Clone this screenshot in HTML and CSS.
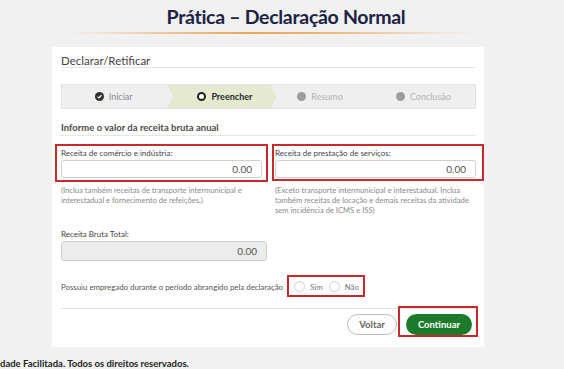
FILE: index.html
```html
<!DOCTYPE html>
<html lang="pt-BR">
<head>
    <meta charset="UTF-8">
    <meta name="viewport" content="width=device-width, initial-scale=1.0">
    <title>Prática – Declaração Normal</title>
    <link rel="stylesheet" href="styles.css">
</head>
<body>
    <header class="slide-head">
        <h1>Prática – Declaração Normal</h1>
        <div class="head-rule"></div>
    </header>

    <main class="card">
        <h2 class="card-title">Declarar/Retificar</h2>

        <ol class="steps">
            <li class="step done">
                <span class="step-icon">
                    <svg viewBox="0 0 10 10" width="9" height="9"><circle cx="5" cy="5" r="5" fill="#2f2f2f"/><path d="M2.8 5.1 L4.4 6.6 L7.2 3.6" fill="none" stroke="#fff" stroke-width="1.4"/></svg>
                </span>
                Iniciar
            </li>
            <li class="step active">
                <span class="step-icon ring"></span>
                Preencher
            </li>
            <li class="step">
                <span class="step-icon dot"></span>
                Resumo
            </li>
            <li class="step">
                <span class="step-icon dot"></span>
                Conclusão
            </li>
        </ol>

        <h3 class="section-title">Informe o valor da receita bruta anual</h3>

        <div class="fields">
            <div class="col">
                <div class="field">
                    <label class="field-label">Receita de comércio e indústria:</label>
                    <div class="money">0.00</div>
                    <span class="mark mark-1"></span>
                </div>
                <p class="help">(Inclua também receitas de transporte intermunicipal e interestadual e fornecimento de refeições.)</p>
            </div>
            <div class="col">
                <div class="field">
                    <label class="field-label">Receita de prestação de serviços:</label>
                    <div class="money">0.00</div>
                    <span class="mark mark-2"></span>
                </div>
                <p class="help">(Exceto transporte intermunicipal e interestadual. Inclua também receitas de locação e demais receitas da atividade sem incidência de ICMS e ISS)</p>
            </div>
        </div>

        <div class="total">
            <label class="field-label">Receita Bruta Total:</label>
            <div class="money readonly">0.00</div>
        </div>

        <div class="question">
            <span>Possuiu empregado durante o período abrangido pela declaração</span>
            <span class="radios">
                <span class="radio"><span class="radio-dot"></span>Sim</span>
                <span class="radio"><span class="radio-dot"></span>Não</span>
                <span class="mark mark-3"></span>
            </span>
        </div>

        <div class="actions">
            <button class="btn btn-back">Voltar</button>
            <span class="btn-wrap">
                <button class="btn btn-next">Continuar</button>
                <span class="mark mark-4"></span>
            </span>
        </div>
    </main>

    <footer class="foot">dade Facilitada. Todos os direitos reservados.</footer>
</body>
</html>
```

FILE: styles.css
```css
body {
    margin: 0;
    background-color: #f1f1f1;
    font-family: Lato, 'Open Sans', sans-serif;
    overflow: hidden;
    height: 369px;
}

.slide-head {
    padding-top: 5px;
    height: 42px;
    box-sizing: border-box;
}

.slide-head h1 {
    margin: 0 0 0 8px;
    text-align: center;
    font-size: 19.5px;
    line-height: 24px;
    font-weight: 700;
    color: #1c2244;
    letter-spacing: -0.3px;
}

.head-rule {
    height: 2px;
    margin: 3px 89px 0 66px;
    background: linear-gradient(90deg, rgba(233, 164, 82, 0), #e9a452 45%, #eeb36c 60%, rgba(233, 164, 82, 0));
}

.card {
    display: block;
    margin: 5px 0 0 52px;
    width: 432px;
    height: 300px;
    box-sizing: border-box;
    padding: 0 8px 0 9px;
    background-color: #fff;
}

.card-title {
    margin: 0;
    padding-top: 7px;
    height: 13px;
    font-size: 11.5px;
    line-height: 14px;
    font-weight: 400;
    color: #444;
    border-bottom: 1px solid #e4e4e4;
}

.steps {
    list-style: none;
    margin: 16px 0 0;
    padding: 0;
    height: 25px;
    display: flex;
    background-color: #efefef;
    border: 1px solid #e2e2e2;
    box-sizing: border-box;
}

.step {
    flex: 1;
    display: flex;
    align-items: center;
    justify-content: center;
    gap: 5px;
    font-size: 9px;
    color: #b4b4b4;
}

.step.done {
    color: #8a8a8a;
}

.step.active {
    background-color: #e4e9d0;
    color: #2a2a2a;
    font-weight: 700;
    margin: 0 -8px 0 2px;
    padding-left: 6px;
    clip-path: polygon(0 0, calc(100% - 6px) 0, 100% 50%, calc(100% - 6px) 100%, 0 100%, 6px 50%);
}

.step-icon {
    width: 9px;
    height: 9px;
    display: inline-flex;
}

.step-icon.ring {
    box-sizing: border-box;
    border-radius: 50%;
    border: 2.5px solid #232323;
    background-color: #fff;
}

.step-icon.dot {
    border-radius: 50%;
    background-color: #9d9d9d;
}

.section-title {
    margin: 13px 0 0;
    height: 13px;
    font-size: 9.5px;
    line-height: 12px;
    font-weight: 700;
    color: #4a4a4a;
    border-bottom: 1px solid #e6e6e6;
}

.fields {
    display: grid;
    grid-template-columns: 201px 201px;
    column-gap: 13px;
    margin-top: 12px;
}

.field {
    position: relative;
}

.field-label {
    display: block;
    font-size: 8px;
    line-height: 11px;
    color: #444;
    margin-bottom: 1px;
}

.money {
    height: 18px;
    box-sizing: border-box;
    border: 1px solid #d0d0d0;
    border-radius: 3px;
    text-align: right;
    padding-right: 9px;
    font-size: 10px;
    line-height: 16px;
    color: #555;
}

.money.readonly {
    height: 20px;
    line-height: 18px;
    background-color: #ececec;
    border-color: #cfcfcf;
}

.mark {
    position: absolute;
    border: 2px solid #c62a2a;
}

.mark-1 {
    top: -4px;
    left: -6px;
    right: -6px;
    bottom: -4px;
}

.mark-2 {
    top: -4px;
    left: -3px;
    right: -8px;
    bottom: -3px;
}

.help {
    margin: 7px 0 0;
    font-size: 7.6px;
    line-height: 10px;
    color: #8a8a8a;
}

.total {
    width: 206px;
    margin-top: 14px;
}

.question {
    display: flex;
    align-items: center;
    margin-top: 15px;
    height: 21px;
    font-size: 7.85px;
    color: #555;
    border-bottom: 1px solid #e4e4e4;
    padding-bottom: 11px;
}

.radios {
    position: relative;
    display: inline-flex;
    align-items: center;
    gap: 6px;
    margin-left: 11px;
    color: #777;
}

.radio {
    display: inline-flex;
    align-items: center;
    gap: 5px;
}

.radio-dot {
    width: 11px;
    height: 11px;
    box-sizing: border-box;
    border: 1px solid #d2d2d2;
    border-radius: 50%;
}

.mark-3 {
    top: -6px;
    bottom: -5px;
    left: -7px;
    right: -6px;
}

.actions {
    display: flex;
    justify-content: flex-end;
    align-items: center;
    gap: 9px;
    margin-top: 5px;
    padding-right: 4px;
}

.btn {
    font-family: Lato, 'Open Sans', sans-serif;
    height: 21px;
    border-radius: 11px;
    font-size: 9.5px;
    font-weight: 700;
    cursor: pointer;
    padding: 0;
}

.btn-back {
    width: 50px;
    background-color: #fff;
    border: 1px solid #b9b9b9;
    color: #666;
}

.btn-wrap {
    position: relative;
    display: inline-flex;
}

.btn-next {
    width: 66px;
    background-color: #1b7a2b;
    border: none;
    color: #fff;
}

.mark-4 {
    top: -8px;
    bottom: -2px;
    left: -8px;
    right: -6px;
}

.foot {
    margin-top: 12px;
    font-size: 9.5px;
    font-weight: 700;
    color: #222;
    line-height: 10px;
}
```
